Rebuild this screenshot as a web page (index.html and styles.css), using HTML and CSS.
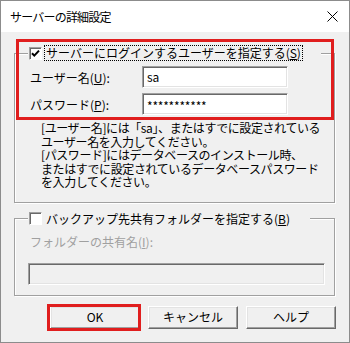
FILE: index.html
```html
<!DOCTYPE html>
<html lang="ja">
<head>
<meta charset="utf-8">
<link rel="stylesheet" href="styles.css">
</head>
<body>
<div class="window">
  <div class="titlebar">
    <span class="title">サーバーの詳細設定</span>
    <svg class="close" width="11" height="11" viewBox="0 0 11 11"><path d="M0.5 0.5L10.5 10.5M10.5 0.5L0.5 10.5" stroke="#000" stroke-width="1" fill="none"/></svg>
  </div>
  <div class="client">
    <fieldset class="group g1">
      <legend class="legend">
        <span class="cb"><svg width="11" height="11" viewBox="0 0 11 11"><path d="M2 5.2L4.3 7.6L9 2.6" stroke="#000" stroke-width="2" fill="none"/></svg></span>
        <span class="cblabel focus">サーバーにログインするユーザーを指定する(<u>S</u>)</span>
      </legend>
      <div class="inner1">
        <div class="row"><span class="lbl">ユーザー名(<u>U</u>):</span><div class="input">sa</div></div>
        <div class="row"><span class="lbl">パスワード(<u>P</u>):</span><div class="input pw">***********</div></div>
        <p class="note">[ユーザー名]には「sa」、またはすでに設定されている<br>ユーザー名を入力してください。<br>[パスワード]にはデータベースのインストール時、<br>またはすでに設定されているデータベースパスワード<br>を入力してください。</p>
      </div>
    </fieldset>
    <fieldset class="group g2">
      <legend class="legend">
        <span class="cb"></span>
        <span class="cblabel">バックアップ先共有フォルダーを指定する(<u>B</u>)</span>
      </legend>
      <div class="inner2">
        <div class="dlbl">フォルダーの共有名(<u>I</u>):</div>
        <div class="input disabled"></div>
      </div>
    </fieldset>
    <div class="buttons">
      <div class="btn">OK</div>
      <div class="btn">キャンセル</div>
      <div class="btn">ヘルプ</div>
    </div>
  </div>
  <div class="mark m1"></div>
  <div class="mark m2"></div>
</div>
</body>
</html>
```

FILE: styles.css
```css
html, body {
  margin: 0;
  padding: 0;
  background: #ffffff;
}
body {
  font-family: "Noto Sans CJK JP", "Noto Sans", sans-serif;
  font-size: 12px;
  color: #000;
}
.window {
  width: 350px;
  height: 343px;
  box-sizing: border-box;
  border: 1px solid #8c8c8c;
  background: #f0f0f0;
  position: relative;
  display: flex;
  flex-direction: column;
}
.titlebar {
  height: 31px;
  background: #ffffff;
  display: flex;
  align-items: center;
  justify-content: space-between;
  padding: 0 11px 0 9px;
}
.title {
  font-size: 12px;
  letter-spacing: -0.8px;
  line-height: 16px;
}
.close {
  display: block;
}
.client {
  flex: 1;
  padding: 13px 0 0 13px;
}
.group {
  margin: 0;
  padding: 0;
  width: 321px;
  box-sizing: border-box;
  border: 1px solid #a0a0a0;
  box-shadow: 1px 1px 0 #ffffff, inset 1px 1px 0 #ffffff;
  min-width: 0;
}
.legend {
  margin-left: 13px;
  padding: 0 18px 0 1px;
  height: 16px;
  display: flex;
  align-items: center;
  background: #f0f0f0;
  line-height: 14px;
}
.cb {
  width: 11px;
  height: 11px;
  box-sizing: content-box;
  background: #ffffff;
  border-top: 1px solid #a0a0a0;
  border-left: 1px solid #a0a0a0;
  border-right: 1px solid #ffffff;
  border-bottom: 1px solid #ffffff;
  box-shadow: inset 1px 1px 0 #696969;
  display: block;
  flex: none;
}
.cb svg {
  display: block;
}
.cblabel {
  margin-left: 2px;
  padding: 0 1px;
  border: 1px dotted transparent;
  line-height: 14px;
}
.cblabel.focus {
  border-color: #000;
}
.inner1 {
  padding: 5px 0 13px 15px;
}
.row {
  display: flex;
  align-items: center;
  height: 22px;
  margin-bottom: 5px;
}
.row + .row {
  margin-bottom: 0;
}
.lbl {
  width: 112px;
  flex: none;
}
.input {
  width: 146px;
  height: 22px;
  box-sizing: border-box;
  background: #ffffff;
  border-top: 1px solid #a0a0a0;
  border-left: 1px solid #a0a0a0;
  border-right: 1px solid #ffffff;
  border-bottom: 1px solid #ffffff;
  box-shadow: inset 1px 1px 0 #696969, inset -1px -1px 0 #e3e3e3;
  padding: 2px 4px 0 4px;
  line-height: 16px;
  font-size: 12px;
}
.input.pw {
  letter-spacing: -0.2px;
  padding-top: 4px;
}
.note {
  margin: 6px 0 0 11px;
  line-height: 13.5px;
  letter-spacing: -0.4px;
}
.g2 {
  margin-top: 8px;
}
.inner2 {
  padding: 7px 0 10px 13px;
}
.dlbl {
  color: #a0a0a0;
  line-height: 16px;
  margin-left: 2px;
}
.input.disabled {
  margin-top: 13px;
  width: 297px;
  background: #f0f0f0;
}
.buttons {
  display: flex;
  justify-content: flex-end;
  gap: 8px;
  margin-top: 10px;
  width: 322px;
}
.btn {
  width: 90px;
  height: 23px;
  box-sizing: border-box;
  background: #f0f0f0;
  border-top: 1px solid #ffffff;
  border-left: 1px solid #ffffff;
  border-right: 1px solid #696969;
  border-bottom: 1px solid #696969;
  box-shadow: inset -1px -1px 0 #a0a0a0, inset 1px 1px 0 #e3e3e3;
  display: flex;
  align-items: center;
  justify-content: center;
  line-height: 16px;
}
.mark {
  position: absolute;
  border: 3px solid #e01e1e;
  box-sizing: border-box;
  pointer-events: none;
}
.m1 {
  left: 15px;
  top: 38px;
  width: 318px;
  height: 81px;
}
.m2 {
  left: 46px;
  top: 303px;
  width: 94px;
  height: 27px;
}
```
